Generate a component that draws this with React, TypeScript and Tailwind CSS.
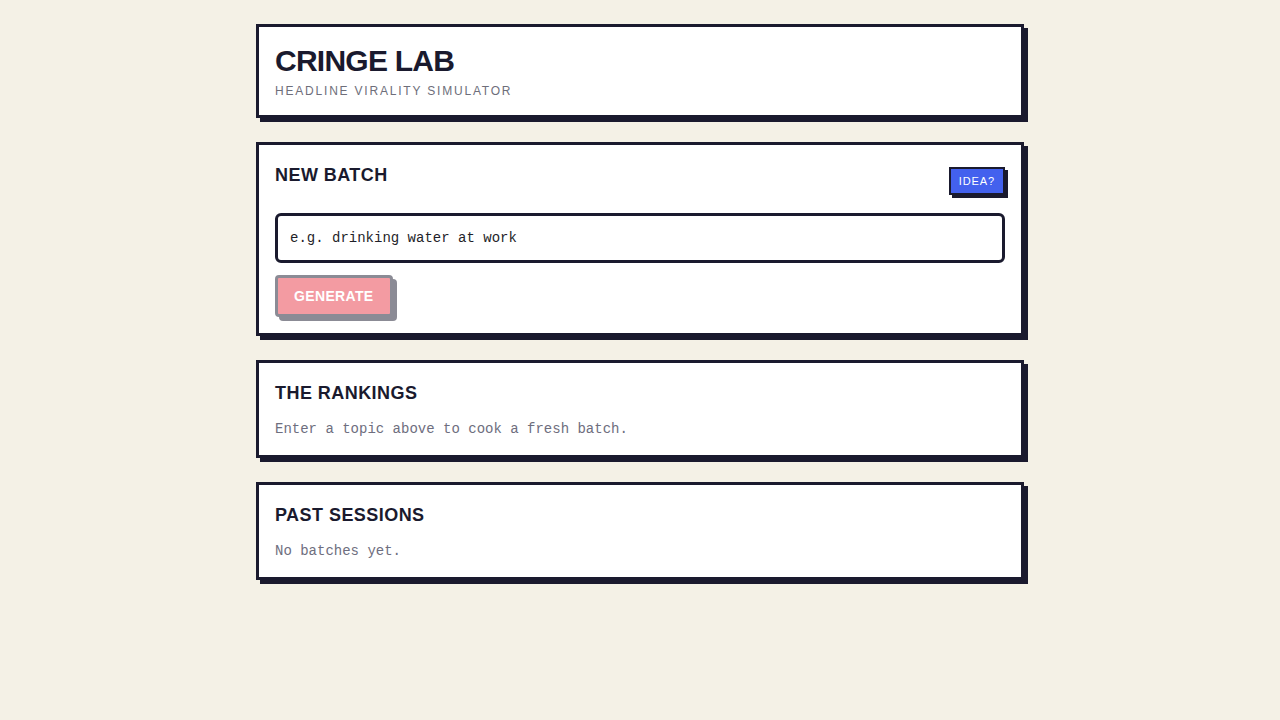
import React, { useState } from "react";

const sans = "font-['Liberation_Sans',Arial,sans-serif]";
const mono = "font-['Liberation_Mono','Courier_New',monospace]";

function Card({ children }: { children: React.ReactNode }) {
    return (
        <section className="bg-white border-[3px] border-[#1a1a2e] shadow-[4px_4px_0_#1a1a2e] p-4">
            {children}
        </section>
    );
}

export default function App() {
    const [topic, setTopic] = useState("");

    return (
        <div className={`min-h-screen bg-[#f4f1e6] text-[#1a1a2e] ${sans}`}>
            <main className="max-w-3xl mx-auto pt-6 flex flex-col gap-6">
                <Card>
                    <h1 className="text-3xl font-bold tracking-tight">CRINGE LAB</h1>
                    <div className="mt-1 text-xs tracking-[0.15em] text-[#6e6e7a]">
                        HEADLINE VIRALITY SIMULATOR
                    </div>
                </Card>

                <Card>
                    <div className="flex items-center justify-between mb-3">
                        <h2 className="text-lg font-bold tracking-wide mb-3">NEW BATCH</h2>
                        <button
                            type="button"
                            className="bg-[#4361ee] text-white text-[11px] leading-4 tracking-[0.08em] px-2 py-1 border-2 border-[#1a1a2e] shadow-[3px_3px_0_#1a1a2e]"
                        >
                            IDEA?
                        </button>
                    </div>

                    <input
                        value={topic}
                        onChange={(e) => setTopic(e.target.value)}
                        placeholder="e.g. drinking water at work"
                        className={`w-full block border-[3px] border-[#1a1a2e] rounded-md px-3 py-3 text-sm leading-5 outline-none text-[#1a1a2e] placeholder:text-[#1f1f2a] ${mono}`}
                    />

                    <button
                        type="button"
                        disabled={!topic}
                        className="mt-3 bg-[#e93947] text-white text-sm font-bold tracking-wide px-4 py-2 border-[3px] border-[#1a1a2e] rounded shadow-[4px_4px_0_#1a1a2e] disabled:opacity-50"
                    >
                        GENERATE
                    </button>
                </Card>

                <Card>
                    <h2 className="text-lg font-bold tracking-wide mb-3">THE RANKINGS</h2>
                    <p className={`text-sm text-[#6e6e7e] ${mono}`}>
                        Enter a topic above to cook a fresh batch.
                    </p>
                </Card>

                <Card>
                    <h2 className="text-lg font-bold tracking-wide mb-3">PAST SESSIONS</h2>
                    <p className={`text-sm text-[#6e6e7e] ${mono}`}>No batches yet.</p>
                </Card>
            </main>
        </div>
    );
}
